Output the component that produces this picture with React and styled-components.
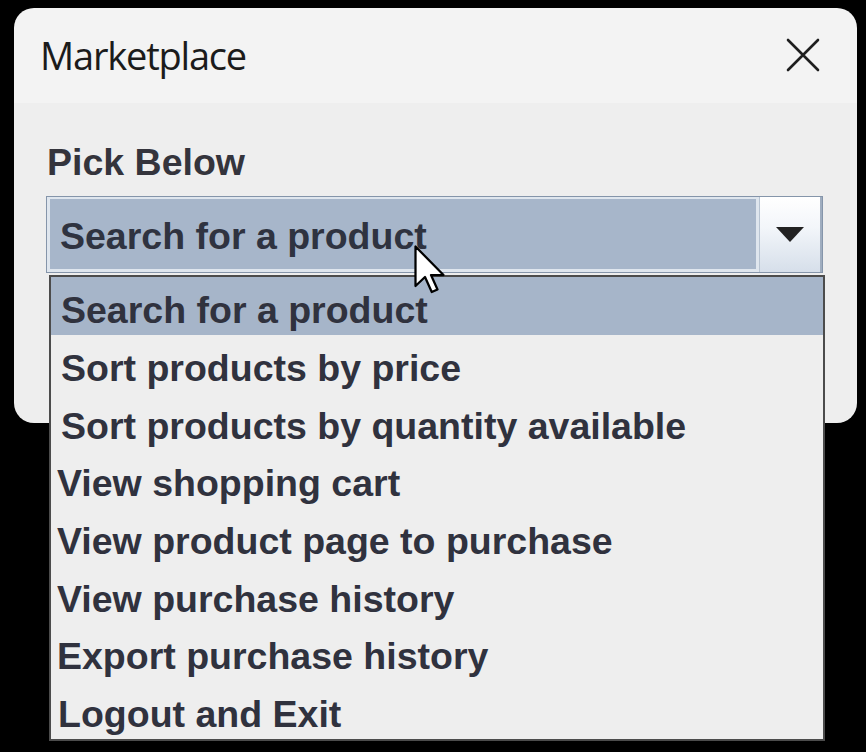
import React from "react";
import styled, { createGlobalStyle } from "styled-components";

const GlobalStyle = createGlobalStyle`
  html, body {
    margin: 0;
    padding: 0;
    background: #000;
  }
  body {
    min-height: 100vh;
    font-family: "Liberation Sans", Arial, sans-serif;
  }
`;

const Stage = styled.div`
  min-height: 752px;
  background: #000;
  padding: 8px 0 0 14px;
  box-sizing: border-box;
`;

const Window = styled.div`
  width: 843px;
  height: 415px;
  display: flex;
  flex-direction: column;
`;

const TitleBar = styled.div`
  height: 95px;
  flex: none;
  background: #f3f3f3;
  border-radius: 20px 20px 0 0;
  display: flex;
  align-items: center;
  justify-content: space-between;
  padding: 0 37px 0 26px;
  box-sizing: border-box;
`;

const Title = styled.span`
  font-family: "Open Sans", "Noto Sans", sans-serif;
  font-size: 38px;
  letter-spacing: -1.2px;
  font-weight: 400;
  color: #1b1b1b;
  line-height: 1;
  margin-top: -2px;
`;

const CloseButton = styled.button`
  width: 34px;
  height: 34px;
  padding: 0;
  border: none;
  background: transparent;
  display: flex;
  align-items: center;
  justify-content: center;
  margin-top: -2px;
`;

const Body = styled.div`
  flex: 1;
  background: #eeeeee;
  border-radius: 0 0 20px 20px;
  padding: 41px 34px 0 32px;
  display: flex;
  flex-direction: column;
`;

const Label = styled.div`
  font-size: 37.5px;
  font-weight: 700;
  line-height: 37px;
  color: #34343c;
  padding-left: 1px;
`;

const Combo = styled.div`
  position: relative;
  margin-top: 15px;
  height: 77px;
  display: flex;
  border: 1px solid #8595aa;
  box-sizing: border-box;
  background: #dfe6ee;
`;

const ComboField = styled.div`
  flex: 1;
  margin: 2px 0 3px 3px;
  background: #a7b6ca;
  display: flex;
  align-items: center;
  padding: 5px 0 0 10px;
  font-size: 37.5px;
  font-weight: 700;
  line-height: 37px;
  color: #2f3340;
`;

const ArrowButton = styled.div`
  width: 60px;
  flex: none;
  margin-left: 3px;
  border-left: 1px solid #b8c4d2;
  border-right: 2px solid #9fadbf;
  background: linear-gradient(#ffffff 0%, #f3f6fa 40%, #d6dfea 100%);
  display: flex;
  align-items: center;
  justify-content: center;
`;

const Popup = styled.ul`
  position: absolute;
  top: calc(100% + 3px);
  left: 2px;
  right: -3px;
  margin: 0;
  padding: 0;
  list-style: none;
  background: #eeeeee;
  border: 2px solid #4c4c4c;
  z-index: 2;
`;

const Option = styled.li`
  height: 57.7px;
  box-sizing: border-box;
  display: flex;
  align-items: center;
  padding: 10px 0 0 ${(p) => p.$indent}px;
  background: ${(p) => (p.$selected ? "#a6b5c9" : "transparent")};
  font-size: 37.5px;
  font-weight: 700;
  line-height: 37px;
  color: #30323e;
  white-space: nowrap;
`;

const Pointer = styled.svg`
  position: absolute;
  left: 367px;
  top: 48px;
  z-index: 3;
  pointer-events: none;
`;

const options = [
  { text: "Search for a product", indent: 10, selected: true },
  { text: "Sort products by price", indent: 10 },
  { text: "Sort products by quantity available", indent: 10 },
  { text: "View shopping cart", indent: 6 },
  { text: "View product page to purchase", indent: 6 },
  { text: "View purchase history", indent: 6 },
  { text: "Export purchase history", indent: 6 },
  { text: "Logout and Exit", indent: 7 },
];

export default function App() {
  return (
    <>
      <GlobalStyle />
      <Stage>
        <Window>
          <TitleBar>
            <Title>Marketplace</Title>
            <CloseButton aria-label="Close">
              <svg width="34" height="34" viewBox="0 0 34 34">
                <path
                  d="M2 2 L32 32 M32 2 L2 32"
                  stroke="#1e1e1e"
                  strokeWidth="2.6"
                  strokeLinecap="round"
                />
              </svg>
            </CloseButton>
          </TitleBar>
          <Body>
            <Label>Pick Below</Label>
            <Combo>
              <ComboField>Search for a product</ComboField>
              <ArrowButton>
                <svg width="28" height="15" viewBox="0 0 28 15">
                  <path d="M0 0 H28 L14 15 Z" fill="#222" />
                </svg>
              </ArrowButton>
              <Popup>
                {options.map((o) => (
                  <Option key={o.text} $indent={o.indent} $selected={o.selected}>
                    {o.text}
                  </Option>
                ))}
              </Popup>
              <Pointer width="32" height="50" viewBox="0 0 12.8 20">
                <path
                  d="M0.6 0.6 V16.4 L4.4 12.8 L7.1 18.8 L9.4 17.8 L6.8 12 H11.8 Z"
                  fill="#fff"
                  stroke="#000"
                  strokeWidth="0.9"
                  strokeLinejoin="round"
                />
              </Pointer>
            </Combo>
          </Body>
        </Window>
      </Stage>
    </>
  );
}
